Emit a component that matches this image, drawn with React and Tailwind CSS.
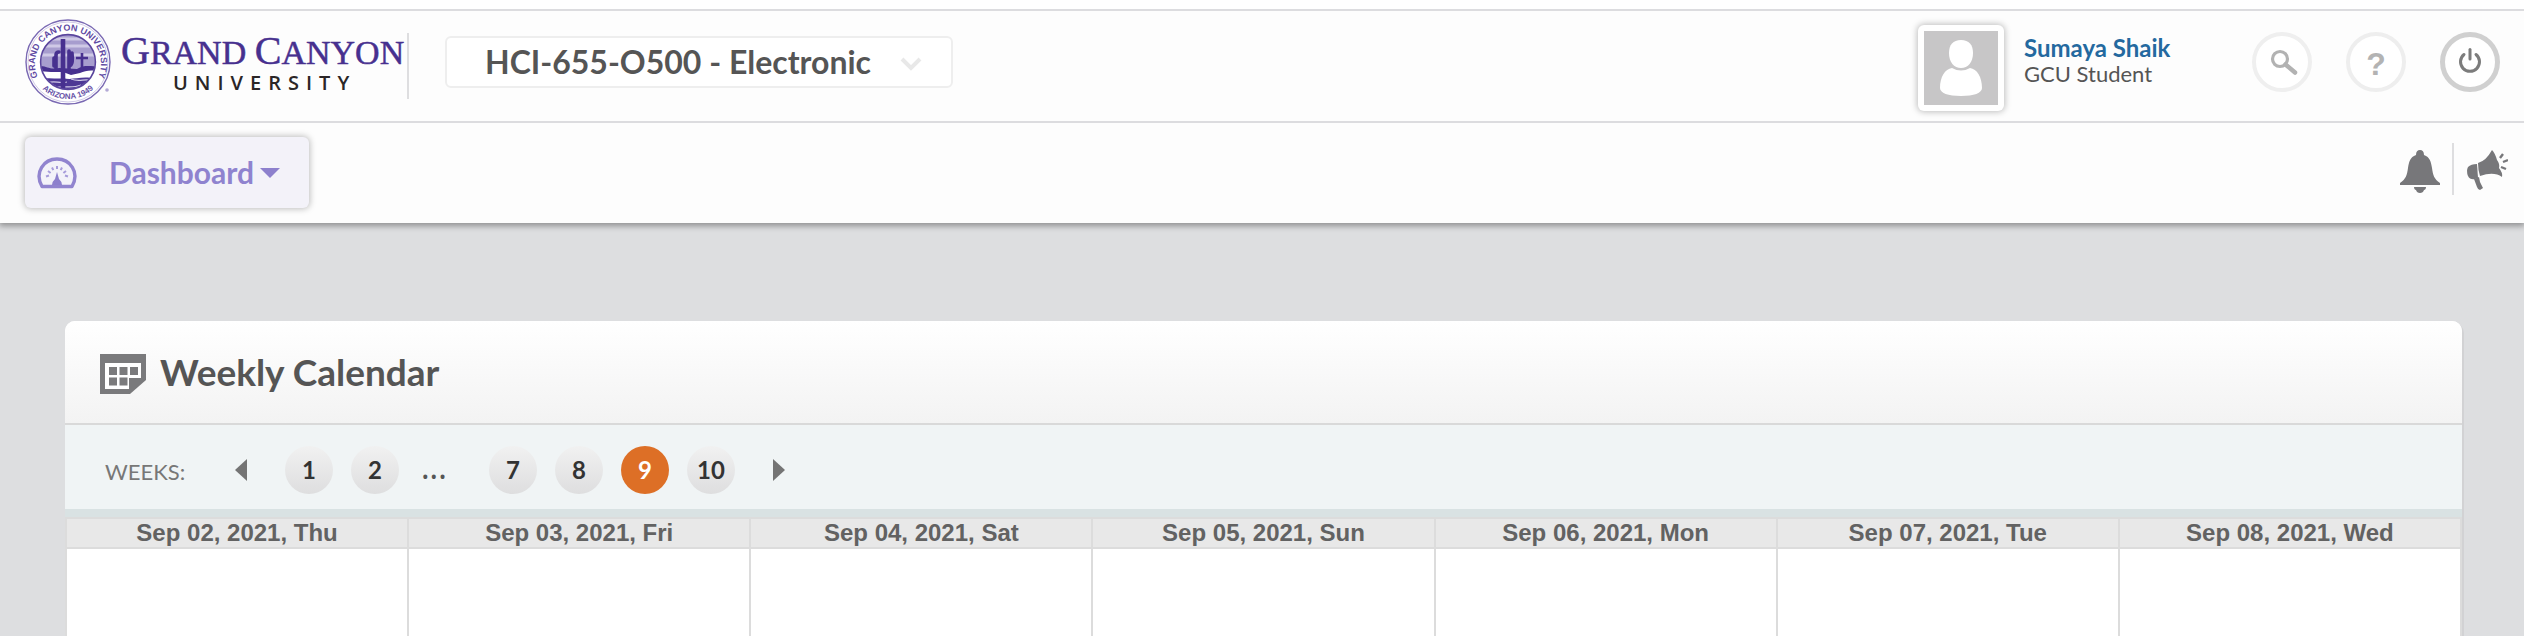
const UI = "font-['Trebuchet_MS','Lato','Open_Sans',sans-serif]";

const days = [
  'Sep 02, 2021, Thu',
  'Sep 03, 2021, Fri',
  'Sep 04, 2021, Sat',
  'Sep 05, 2021, Sun',
  'Sep 06, 2021, Mon',
  'Sep 07, 2021, Tue',
  'Sep 08, 2021, Wed',
];

function Seal() {
  return (
    <svg viewBox="0 0 86 86" className="size-[86px] shrink-0" aria-hidden="true">
      <defs>
        <path id="sealTop" d="M15 62 A33 33 0 1 1 71 62" />
        <path id="sealBottom" d="M12 64 A38 38 0 0 0 74 64" />
        <clipPath id="sealDisc">
          <circle cx="43" cy="43" r="27" />
        </clipPath>
      </defs>
      <circle cx="43" cy="43" r="42" fill="#fff" stroke="#7a69b3" strokeWidth="1.4" />
      <circle cx="43" cy="43" r="40" fill="none" stroke="#c4bcdf" strokeWidth="0.8" />
      <g clipPath="url(#sealDisc)">
        <rect x="14" y="14" width="58" height="58" fill="#a79dce" />
        <path d="M14 20H72M14 27H72M14 36H72" stroke="#cfc9e6" strokeWidth="3" />
        <path d="M14 50H72V72H14Z" fill="#fff" />
        <path d="M14 47C22 47 24 51 34 49L52 50C60 45 66 48 72 47V52C64 51 60 52 55 54L46 56L38 53L26 53L14 52Z" fill="#47308f" />
        <path d="M14 61C24 57 32 61 38 59C48 62 56 56 72 60V72H14Z" fill="#4d3795" />
        <path d="M22 64C30 61 34 65 42 63M46 60C54 63 58 60 64 61M30 69C38 66 46 70 56 66" stroke="#cfc9e6" strokeWidth="1.2" fill="none" />
      </g>
      <path d="M38 20V70" stroke="#47308f" strokeWidth="4.6" />
      <path d="M31 50V36Q31 33 34 33M44 50V32M29 47V39M46 46Q48 44 47 34" stroke="#47308f" strokeWidth="3.6" strokeLinecap="round" fill="none" />
      <path d="M57 34V50M51 39H63" stroke="#47308f" strokeWidth="2.6" />
      <circle cx="43" cy="43" r="27.4" fill="none" stroke="#5a459d" strokeWidth="1.6" />
      <text fill="#5f4aa3" className="font-['Liberation_Sans'] text-[9px] font-bold">
        <textPath href="#sealTop" startOffset="50%" textAnchor="middle">GRAND CANYON UNIVERSITY</textPath>
      </text>
      <text fill="#6753a8" className="font-['Liberation_Sans'] text-[8px] font-bold">
        <textPath href="#sealBottom" startOffset="50%" textAnchor="middle">ARIZONA 1949</textPath>
      </text>
      <circle cx="82" cy="71" r="1.8" fill="#b3a9d6" />
    </svg>
  );
}

function Logo() {
  return (
    <a href="#home" className="flex items-center gap-2.5 text-[#47308f]">
      <Seal />
      <span className="flex flex-col whitespace-nowrap pt-1">
        <span className="font-['Liberation_Serif',serif] text-[34px] leading-9 [-webkit-text-stroke:0.5px_#47308f]">
          <span className="text-[40px]">G</span>RAND <span className="text-[40px]">C</span>ANYON
        </span>
        <span className="pl-[52px] font-['Open_Sans',sans-serif] text-xl leading-6 font-semibold tracking-[7px] text-[#2b2627]">
          UNIVERSITY
        </span>
      </span>
    </a>
  );
}

function Gauge() {
  return (
    <svg viewBox="0 0 40 32" className="h-8 w-10" aria-hidden="true">
      <path d="M5 29.5C-3 15 7 2 20 2S43 15 35 29.5Z" fill="none" stroke="#9184cf" strokeWidth="3.4" strokeLinejoin="round" />
      <path d="M9 19.500l3-1M11 14l2.600 2M15 10.500l1.300 2.600M20 9v3M25 10.500l-1.300 2.600M29 14l-2.600 2M31 19.500l-3-1" stroke="#a79cda" strokeWidth="2" />
      <path d="M20 15L22 22Q24.500 24 25 28H15Q15.500 24 18 22Z" fill="#8d80cd" />
    </svg>
  );
}

function RoundButton({ label, ring, children }) {
  return (
    <button type="button" aria-label={label} className={`flex size-[60px] items-center justify-center rounded-full bg-white ${ring}`}>
      {children}
    </button>
  );
}

function WeekButton({ n, active }) {
  return (
    <button
      type="button"
      className={`flex size-12 items-center justify-center rounded-full text-2xl font-bold ${
        active ? 'bg-[#dd6f26] text-white' : 'bg-linear-to-b from-[#f1f1f1] to-[#dededf] text-[#333]'
      }`}
    >
      {n}
    </button>
  );
}

export default function App() {
  return (
    <div className={`flex min-h-screen flex-col overflow-hidden bg-[#dddee0] ${UI} text-[#555]`}>
      <header className="bg-[#fdfdfd] shadow-[0_2px_6px_1px_rgba(0,0,0,0.35)]">
        <div className="h-[9px] bg-white" />
        <div className="flex h-[114px] items-center border-y-2 border-[#dcdcdf] pr-6 pl-[25px]">
          <div className="flex h-[66px] items-center border-r-2 border-[#dedee0]">
            <div className="-mt-2 w-[382px]">
              <Logo />
            </div>
          </div>
          <div className="-mt-2 ml-9 flex h-[52px] w-[508px] items-center rounded-md border-2 border-[#eee] bg-white pr-6">
            <select aria-label="Course" className="h-full flex-1 appearance-none bg-transparent pl-[38px] text-[32px] leading-10 font-bold outline-none">
              <option>HCI-655-O500 - Electronic</option>
            </select>
            <svg viewBox="0 0 24 16" className="mt-1 mr-1 h-4 w-6" aria-hidden="true">
              <path d="M3 3L12 12L21 3" fill="none" stroke="#e8e8e8" strokeWidth="4" />
            </svg>
          </div>

          <div className="ml-auto flex items-center">
            <div className="mt-1 rounded-md bg-white p-1.5 shadow-[0_0_6px_1px_rgba(0,0,0,0.25)]">
              <svg viewBox="0 0 74 74" className="size-[74px]" role="img" aria-label="Profile picture">
                <rect width="74" height="74" fill="#c7c6c7" />
                <path d="M37 9C45 9 49 14 49 22C49 31 44 37 37 37S25 31 25 22C25 14 29 9 37 9Z" fill="#fff" />
                <path d="M16 57C16 46 21 38 28 37Q37 42 46 37C53 38 58 46 58 57C58 62 50 65 37 65S16 62 16 57Z" fill="#fff" />
              </svg>
            </div>
            <div className="-mt-2.5 ml-5 w-[228px] leading-[26px]">
              <a href="#profile" className="block text-2xl leading-[26px] font-bold text-[#24699f]">Sumaya Shaik</a>
              <div className="text-[22px] leading-[26px]">GCU Student</div>
            </div>
            <div className="-mt-2 flex gap-[34px]">
              <RoundButton label="Search" ring="border-4 border-[#efefef]">
                <svg viewBox="0 0 32 32" className="ml-1 size-8" fill="none" stroke="#b2b2b2" aria-hidden="true">
                  <circle cx="12" cy="13" r="7.500" strokeWidth="3.200" />
                  <path d="M17.500 18.500L27 26.500" strokeWidth="4.500" strokeLinecap="round" />
                </svg>
              </RoundButton>
              <RoundButton label="Help" ring="border-4 border-[#eee]">
                <span className="pt-1 font-['Liberation_Sans',sans-serif] text-[32px] leading-8 font-bold text-[#b3b3b3]">?</span>
              </RoundButton>
              <RoundButton label="Sign out" ring="border-[5px] border-[#d0d0d0]">
                <svg viewBox="0 0 32 32" className="size-8" fill="none" stroke="#7c7c7c" strokeWidth="3" strokeLinecap="round" aria-hidden="true">
                  <path d="M16 3.500V13" />
                  <path d="M10 8.500A9.500 9.500 0 1 0 22 8.500" />
                </svg>
              </RoundButton>
            </div>
          </div>
        </div>

        <nav className="flex h-[100px] items-start justify-between pr-4 pl-[25px]">
          <button type="button" className="mt-3.5 flex h-[71px] w-[284px] items-center rounded-md bg-[#f3f2f9] pl-3 text-[30px] font-bold text-[#8f83cf] shadow-[0_0_6px_1px_rgba(0,0,0,0.25)]">
            <Gauge />
            <span className="ml-8">Dashboard</span>
            <svg viewBox="0 0 20 10" className="ml-1.5 h-2.5 w-5" aria-hidden="true">
              <path d="M0 0H20L10 10Z" fill="#8d80cd" />
            </svg>
          </button>
          <div className="mt-5 flex items-center">
            <button type="button" aria-label="Notifications" className="pt-1">
              <svg viewBox="0 0 40 43" className="h-[43px] w-10" fill="#77777a" aria-hidden="true">
                <path d="M20 0C22.500 0 24 1.500 24 5C30 7 31 12 32 18C33 25 34 29 40 33V35H0V33C6 29 7 25 8 18C9 12 10 7 16 5C16 1.500 17.500 0 20 0Z" />
                <path d="M14 37H26C26 39 25 40 24 40C23.500 42 22 43 20 43S16.500 42 16 40C15 40 14 39 14 37Z" />
              </svg>
            </button>
            <div className="ml-3 h-[52px] w-0.5 bg-[#dedee0]" />
            <button type="button" aria-label="Announcements" className="ml-3">
              <svg viewBox="0 0 42 43" className="h-[43px] w-[42px]" fill="#77777a" aria-hidden="true">
                <path d="M2 19Q5 16 11 16L12 30L9 31Q4 32 2 28Q0 23 2 19Z" />
                <path d="M8 31L13 29L14 34L17 40L14 42Q12 42 11 39Z" />
                <path d="M12 15Q20 13 26 2Q29 5 31 12Q34 16 33 20Q37 25 36 29Q28 23 14 28Q12 22 12 15Z" />
                <path d="M34 10L37 6M37 14L42 12M35 19L40 21" stroke="#77777a" strokeWidth="2.400" />
              </svg>
            </button>
          </div>
        </nav>
      </header>

      <main className="mt-[98px] mr-[62px] ml-[65px] flex flex-1 flex-col rounded-t-[10px] bg-white shadow-[2px_2px_0_0_#d2d2d4]">
        <div className="flex h-[104px] items-center rounded-t-[10px] border-b-2 border-[#d9d9d9] bg-linear-to-b from-white to-[#f3f3f3] pl-[35px]">
          <svg viewBox="0 0 46 40" className="mt-1 h-10 w-[46px]" aria-hidden="true">
            <path d="M0 0H46V26L30 40H0Z" fill="#7a7a7c" />
            <path d="M5 9H41V24H29V35H5Z" fill="#fff" />
            <path d="M9 13h8v8H9zM19.500 13h8v8h-8zM30 13h8v8h-8zM9 23.500h8v8H9zM19.500 23.500h8v8h-8z" fill="#7a7a7c" />
          </svg>
          <h1 className="ml-3.5 text-[37px] leading-10 font-bold">Weekly Calendar</h1>
        </div>

        <div className="flex h-[92px] items-center border-b-8 border-[#d9e2e3] bg-[#f0f4f5] pt-1.5 pl-10">
          <div className="w-[130px] pt-0.5 text-[22px] text-[#777]">WEEKS:</div>
          <button type="button" aria-label="Previous weeks" className="mr-[38px]">
            <svg viewBox="0 0 12 22" className="h-[22px] w-3" aria-hidden="true">
              <path d="M12 0V22L0 11Z" fill="#747474" />
            </svg>
          </button>
          <div className="flex items-center gap-[18px]">
            <WeekButton n={1} />
            <WeekButton n={2} />
            <span className="w-[54px] pb-1.5 pl-1 font-['Noto_Sans',sans-serif] text-[32px] leading-8">...</span>
            <WeekButton n={7} />
            <WeekButton n={8} />
            <WeekButton n={9} active />
            <WeekButton n={10} />
          </div>
          <button type="button" aria-label="Next weeks" className="ml-[38px]">
            <svg viewBox="0 0 12 22" className="h-[22px] w-3" aria-hidden="true">
              <path d="M0 0V22L12 11Z" fill="#747474" />
            </svg>
          </button>
        </div>

        <table className="w-full flex-1 table-fixed border-collapse font-['Liberation_Sans',Arial,sans-serif]">
          <thead>
            <tr>
              {days.map((d) => (
                <th key={d} scope="col" className="h-[30px] border-2 border-[#dcdcdc] bg-[#e8e8e8] p-0 text-2xl leading-7 font-bold text-[#626262]">
                  {d}
                </th>
              ))}
            </tr>
          </thead>
          <tbody>
            <tr>
              {days.map((d) => (
                <td key={d} className="h-[88px] border-2 border-b-0 border-[#dcdcdc] bg-white" />
              ))}
            </tr>
          </tbody>
        </table>
      </main>
    </div>
  );
}
